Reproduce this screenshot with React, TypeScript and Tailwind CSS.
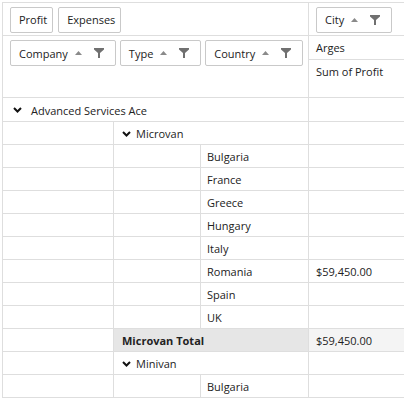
import React from 'react';

const font = { fontFamily: '"Open Sans", "Noto Sans", sans-serif' };

const SortArrow = () => (
  <svg width="7" height="4" viewBox="0 0 7 4" className="shrink-0">
    <path d="M0 4 L3.5 0 L7 4 Z" fill="#8a8a8a" />
  </svg>
);

const Funnel = () => (
  <svg width="10" height="10" viewBox="0 0 10 10" className="shrink-0">
    <path d="M0 0 H10 V1.5 L6 5 V10 H4 V5 L0 1.5 Z" fill="#707070" />
  </svg>
);

const Chevron = () => (
  <svg width="9" height="6" viewBox="0 0 9 6" className="shrink-0">
    <path d="M1 1 L4.5 4.5 L8 1" fill="none" stroke="#111" strokeWidth="2" />
  </svg>
);

const FieldButton = ({ label, sort = false }: { label: string; sort?: boolean }) => (
  <div
    className={`h-[26px] box-border border border-[#c9c9c9] rounded-[2px] bg-white flex items-center pl-[8px] pt-[2px] text-[11px] text-[#222] whitespace-nowrap ${
      sort ? 'pr-[11px]' : 'pr-[5px]'
    }`}
  >
    <span>{label}</span>
    {sort && (
      <>
        <span className="ml-[7px] mb-[2px]"><SortArrow /></span>
        <span className="ml-[12px] mb-[2px]"><Funnel /></span>
      </>
    )}
  </div>
);

type Row = { kind: 'company' | 'type' | 'country' | 'total'; label: string; value?: string };

const rows: Row[] = [
  { kind: 'company', label: 'Advanced Services Ace' },
  { kind: 'type', label: 'Microvan' },
  { kind: 'country', label: 'Bulgaria' },
  { kind: 'country', label: 'France' },
  { kind: 'country', label: 'Greece' },
  { kind: 'country', label: 'Hungary' },
  { kind: 'country', label: 'Italy' },
  { kind: 'country', label: 'Romania', value: '$59,450.00' },
  { kind: 'country', label: 'Spain' },
  { kind: 'country', label: 'UK' },
  { kind: 'total', label: 'Microvan Total', value: '$59,450.00' },
  { kind: 'type', label: 'Minivan' },
  { kind: 'country', label: 'Bulgaria' },
];

export default function App() {
  return (
    <div className="w-[404px] h-[402px] bg-white overflow-hidden text-[11px] text-[#222]" style={font}>
      <div className="ml-[2px] mt-[2px] w-[520px] border-l border-t border-[#dedede]">
        {/* data fields / column fields */}
        <div className="flex h-[33px] box-border border-b border-[#dedede]">
          <div className="w-[306px] box-border border-r border-[#dedede] flex items-center gap-[5px] pl-[7px] pt-[1px]">
            <FieldButton label="Profit" />
            <FieldButton label="Expenses" />
          </div>
          <div className="flex-1 flex items-center pl-[7px] pt-[1px]">
            <FieldButton label="City" sort />
          </div>
        </div>

        {/* row fields / column headers */}
        <div className="flex h-[62px] box-border border-b border-[#dedede]">
          <div className="w-[306px] box-border border-r border-[#dedede] flex items-start gap-[4px] pl-[7px] pt-[4px]">
            <FieldButton label="Company" sort />
            <FieldButton label="Type" sort />
            <FieldButton label="Country" sort />
          </div>
          <div className="flex-1 flex flex-col">
            <div className="h-[24px] box-border border-b border-[#dedede] flex items-center pl-[7px] pt-[2px]">Arges</div>
            <div className="flex-1 pl-[7px] pt-[4px]">Sum of Profit</div>
          </div>
        </div>

        {/* body */}
        {rows.map((r, i) => (
          <div
            key={i}
            className={`flex box-border border-b border-[#dedede] ${i === 0 ? 'h-[24px]' : 'h-[23px]'}`}
          >
            {r.kind === 'company' ? (
              <div className="w-[306px] box-border border-r border-[#dedede] flex items-center gap-[9px] pl-[10px] pt-[3px]">
                <span className="mb-[2px]"><Chevron /></span>
                <span>{r.label}</span>
              </div>
            ) : (
              <>
                <div className="w-[111px] box-border border-r border-[#dedede]" />
                {r.kind === 'type' && (
                  <div className="w-[195px] box-border border-r border-[#dedede] flex items-center gap-[5px] pl-[8px] pt-[3px]">
                    <span className="mb-[2px]"><Chevron /></span>
                    <span>{r.label}</span>
                  </div>
                )}
                {r.kind === 'total' && (
                  <div className="w-[195px] box-border border-r border-[#dedede] bg-[#e6e6e6] flex items-center pl-[8px] pt-[3px] font-bold">
                    {r.label}
                  </div>
                )}
                {r.kind === 'country' && (
                  <>
                    <div className="w-[87px] box-border border-r border-[#dedede]" />
                    <div className="w-[108px] box-border border-r border-[#dedede] flex items-center pl-[6px] pt-[3px]">
                      {r.label}
                    </div>
                  </>
                )}
              </>
            )}
            <div
              className={`flex-1 flex items-center pl-[7px] pt-[3px] ${r.kind === 'total' ? 'bg-[#f4f4f4]' : ''}`}
            >
              {r.value ?? ''}
            </div>
          </div>
        ))}
      </div>
    </div>
  );
}
